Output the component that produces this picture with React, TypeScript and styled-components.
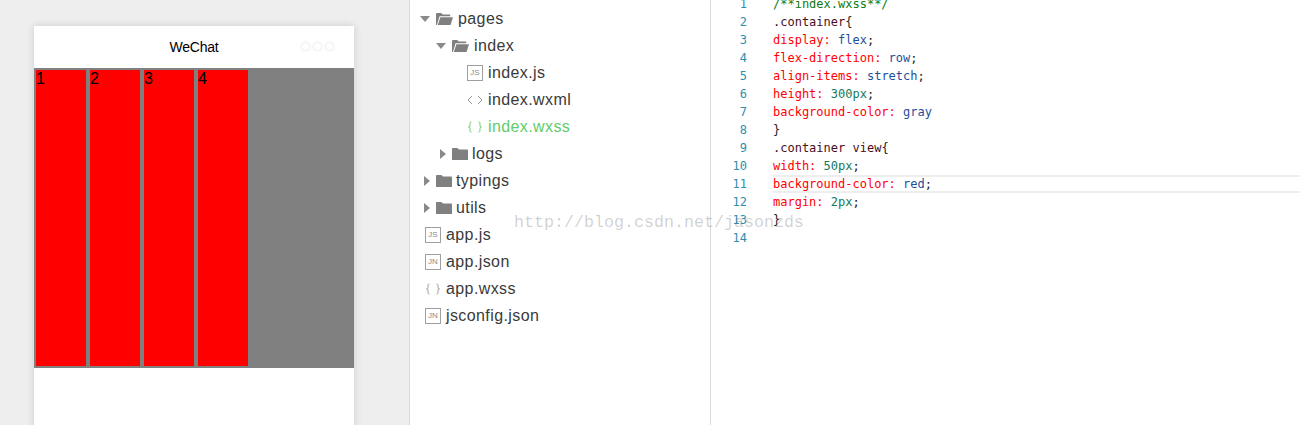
import React from 'react';
import styled, {createGlobalStyle} from 'styled-components';

const GlobalStyle = createGlobalStyle`
    html, body {
        margin: 0;
        padding: 0;
        background: #fff;
    }
`

type TreeItem = {
    name: string
    indent: number
    kind: 'open' | 'closed' | 'js' | 'jn' | 'xml' | 'css'
    active?: boolean
}

const treeItems: TreeItem[] = [
    {name: 'pages', indent: 10, kind: 'open'},
    {name: 'index', indent: 26, kind: 'open'},
    {name: 'index.js', indent: 57, kind: 'js'},
    {name: 'index.wxml', indent: 57, kind: 'xml'},
    {name: 'index.wxss', indent: 57, kind: 'css', active: true},
    {name: 'logs', indent: 30, kind: 'closed'},
    {name: 'typings', indent: 14, kind: 'closed'},
    {name: 'utils', indent: 14, kind: 'closed'},
    {name: 'app.js', indent: 15, kind: 'js'},
    {name: 'app.json', indent: 15, kind: 'jn'},
    {name: 'app.wxss', indent: 15, kind: 'css'},
    {name: 'jsconfig.json', indent: 15, kind: 'jn'},
]

type Token = { text: string, type: 'comment' | 'selector' | 'prop' | 'value' | 'number' | 'plain' }

const codeLines: Token[][] = [
    [{text: '/**index.wxss**/', type: 'comment'}],
    [{text: '.container', type: 'selector'}, {text: '{', type: 'plain'}],
    [{text: 'display:', type: 'prop'}, {text: ' flex', type: 'value'}, {text: ';', type: 'plain'}],
    [{text: 'flex-direction:', type: 'prop'}, {text: ' row', type: 'value'}, {text: ';', type: 'plain'}],
    [{text: 'align-items:', type: 'prop'}, {text: ' stretch', type: 'value'}, {text: ';', type: 'plain'}],
    [{text: 'height:', type: 'prop'}, {text: ' 300', type: 'number'}, {text: 'px', type: 'number'}, {text: ';', type: 'plain'}],
    [{text: 'background-color:', type: 'prop'}, {text: ' gray', type: 'value'}],
    [{text: '}', type: 'plain'}],
    [{text: '.container view', type: 'selector'}, {text: '{', type: 'plain'}],
    [{text: 'width:', type: 'prop'}, {text: ' 50px', type: 'number'}, {text: ';', type: 'plain'}],
    [{text: 'background-color:', type: 'prop'}, {text: ' red', type: 'value'}, {text: ';', type: 'plain'}],
    [{text: 'margin:', type: 'prop'}, {text: ' 2px', type: 'number'}, {text: ';', type: 'plain'}],
    [{text: '}', type: 'plain'}],
    [],
]

const tokenColors = {
    comment: '#117a11',
    selector: '#4a0d1c',
    prop: '#ff0000',
    value: '#1c4f9c',
    number: '#13795f',
    plain: '#222222',
}

const OpenFolder = () => (
    <svg width="18" height="14" viewBox="0 0 18 14">
        <path d="M1 13V2.2C1 1.5 1.5 1 2.2 1h4l1.6 1.6h7.4v1.6H4.6L1.9 13z" fill="#808080"/>
        <path d="M5.4 5.2H18L15.6 13H2.8z" fill="#808080"/>
    </svg>
)

const ClosedFolder = () => (
    <svg width="18" height="14" viewBox="0 0 18 14">
        <path d="M1 13V2c0-.6.4-1 1-1h4.4L8 2.6h8.2c.5 0 .8.3.8.8V13z" fill="#808080"/>
    </svg>
)

const AngleIcon = () => (
    <svg width="16" height="12" viewBox="0 0 16 12" fill="none" stroke="#9a9a9a" strokeWidth="1">
        <path d="M5 2L1 6l4 4"/>
        <path d="M11 2l4 4-4 4"/>
    </svg>
)

const BraceIcon: React.FC<{ color: string }> = ({color}) => (
    <svg width="16" height="12" viewBox="0 0 16 12" fill="none" stroke={color} strokeWidth="1">
        <path d="M4.5 1C3 1 3 2 3 3v1.5C3 5.500 2.500 6 1.500 6 2.500 6 3 6.500 3 7.500V9c0 1 0 2 1.500 2"/>
        <path d="M11.500 1C13 1 13 2 13 3v1.500c0 1 .5 1.500 1.500 1.500-1 0-1.500.5-1.500 1.500V9c0 1 0 2-1.500 2"/>
    </svg>
)

const Caret: React.FC<{ open: boolean }> = ({open}) => (
    <CaretBox $open={open}>
        {open ? (
            <svg width="10" height="6" viewBox="0 0 10 6"><path d="M0 0h10L5 6z" fill="#8a8a8a"/></svg>
        ) : (
            <svg width="6" height="10" viewBox="0 0 6 10"><path d="M0 0v10l6-5z" fill="#8a8a8a"/></svg>
        )}
    </CaretBox>
)

const TreeRow: React.FC<{ item: TreeItem }> = ({item}) => {
    const isFolder = item.kind === 'open' || item.kind === 'closed'

    return (
        <Row $indent={item.indent}>
            {isFolder && <Caret open={item.kind === 'open'}/>}
            {item.kind === 'open' && <OpenFolder/>}
            {item.kind === 'closed' && <ClosedFolder/>}
            {item.kind === 'js' && <FileBadge>JS</FileBadge>}
            {item.kind === 'jn' && <FileBadge>JN</FileBadge>}
            {item.kind === 'xml' && <AngleIcon/>}
            {item.kind === 'css' && <BraceIcon color={item.active ? '#62cc6b' : '#9a9a9a'}/>}
            <RowName $active={item.active} $gap={item.kind === 'closed' ? 3 : 5}>{item.name}</RowName>
        </Row>
    )
}

export default function App() {
    return (
        <>
            <GlobalStyle/>
            <Page>
                <Simulator>
                    <Phone>
                        <NavBar>
                            WeChat
                            <Dots>
                                <Dot/>
                                <Dot/>
                                <Dot/>
                            </Dots>
                        </NavBar>
                        <Container>
                            {[1, 2, 3, 4].map(n => <Cell key={n}>{n}</Cell>)}
                        </Container>
                    </Phone>
                </Simulator>
                <Tree>
                    {treeItems.map(item => <TreeRow key={item.name + item.indent} item={item}/>)}
                </Tree>
                <Editor>
                    {codeLines.map((tokens, i) => (
                        <CodeLine key={i}>
                            <LineNumber>{i + 1}</LineNumber>
                            <LineText $current={i === 10}>
                                {tokens.map((t, j) => <Tok key={j} $type={t.type}>{t.text}</Tok>)}
                            </LineText>
                        </CodeLine>
                    ))}
                </Editor>
                <Watermark>http://blog.csdn.net/jasonzds</Watermark>
            </Page>
        </>
    )
}

const Page = styled.div`
    position: relative;
    display: flex;
    width: 1300px;
    height: 425px;
    overflow: hidden;
    background: #fff;
`

const Simulator = styled.div`
    box-sizing: border-box;
    width: 410px;
    padding: 26px 0 0 34px;
    background: #eeeeee;
    border-right: 1px solid #d9d9d9;
`

const Phone = styled.div`
    width: 320px;
    height: 420px;
    background: #fff;
    box-shadow: 0 0 8px rgba(0, 0, 0, 0.14);
`

const NavBar = styled.div`
    position: relative;
    height: 42px;
    display: flex;
    align-items: center;
    justify-content: center;
    font: 14px "Liberation Sans", Arial, sans-serif;
    letter-spacing: -0.2px;
    color: #000;
`

const Dots = styled.div`
    position: absolute;
    right: 21px;
    top: 17px;
    display: flex;
    gap: 5px;
`

const Dot = styled.span`
    width: 7px;
    height: 7px;
    border-radius: 50%;
    background: #fff;
    box-shadow: 0 0 3px rgba(0, 0, 0, 0.18);
`

const Container = styled.div`
    display: flex;
    align-items: stretch;
    height: 300px;
    background: gray;
`

const Cell = styled.div`
    width: 50px;
    margin: 2px;
    background: red;
    font: 16px/18px "Liberation Sans", Arial, sans-serif;
    color: #000;
`

const Tree = styled.div`
    box-sizing: border-box;
    width: 301px;
    padding-top: 5px;
    border-right: 1px solid #d9d9d9;
`

const Row = styled.div<{ $indent: number }>`
    display: flex;
    align-items: center;
    height: 27px;
    padding-left: ${props => props.$indent}px;
`

const CaretBox = styled.span<{ $open: boolean }>`
    display: flex;
    align-items: center;
    width: ${props => props.$open ? 15 : 11}px;
`

const FileBadge = styled.span`
    box-sizing: border-box;
    width: 16px;
    height: 16px;
    border: 1px solid #a0a0a0;
    display: flex;
    align-items: center;
    justify-content: center;
    font: 8px "Liberation Sans", Arial, sans-serif;
    color: #8a8a8a;
`

const RowName = styled.span<{ $active?: boolean, $gap: number }>`
    margin-left: ${props => props.$gap}px;
    font: 16px "Liberation Sans", Arial, sans-serif;
    letter-spacing: 0.4px;
    color: ${props => props.$active ? '#62cc6b' : '#3a3a3a'};
`

const Editor = styled.div`
    flex: 1;
    margin-top: -5px;
    font: 12px/18px "DejaVu Sans Mono", monospace;
`

const CodeLine = styled.div`
    display: flex;
    height: 18px;
`

const LineNumber = styled.span`
    width: 36px;
    margin-right: 26px;
    text-align: right;
    color: #2c8fb0;
`

const LineText = styled.span<{ $current: boolean }>`
    flex: 1;
    white-space: pre;
    ${props => props.$current && `
        box-sizing: border-box;
        line-height: 14px;
        border-top: 2px solid #eeeeee;
        border-bottom: 2px solid #eeeeee;
    `}
`

const Tok = styled.span<{ $type: Token['type'] }>`
    color: ${props => tokenColors[props.$type]};
`

const Watermark = styled.div`
    position: absolute;
    left: 514px;
    top: 213px;
    font: 16.67px/20px "Liberation Mono", monospace;
    color: rgba(90, 90, 90, 0.28);
    white-space: nowrap;
    pointer-events: none;
`
